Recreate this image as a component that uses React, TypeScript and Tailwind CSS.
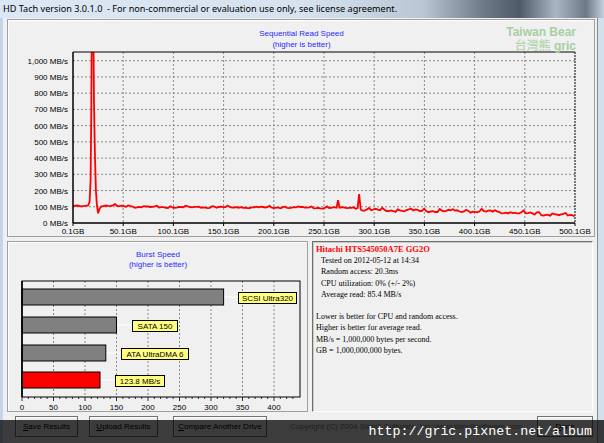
import React from 'react';

// Sequential read chart geometry (svg-local coords)
const PL = 64;
const PT = 2;
const PR = 566;
const PB = 173;
const GX = (gb: number) => PL + gb * 1.004;
const VY = (v: number) => PB - v * 0.1623;

const base = (gb: number) => {
  if (gb < 60) return 104;
  if (gb < 285) return 98 - (gb - 60) * 0.022;
  if (gb < 420) return 80 - (gb - 285) * 0.08;
  return 68 - (gb - 420) * 0.3;
};

const noise = (i: number, gb: number) => {
  const amp = gb > 290 ? 1.6 : 1;
  return amp * (Math.sin(i * 1.7) * 2.5 + Math.sin(i * 0.37) * 3 + (Math.sin(i * 5.3) > 0.85 ? 7 : 0));
};

const buildLine = () => {
  const pts: [number, number][] = [
    [0.1, 105], [4, 108], [8, 103], [12, 106], [15, 108], [16.5, 130], [17.5, 260], [18.2, 700],
    [18.6, 1100], [20.4, 1100], [20.9, 740], [21.8, 430], [22.8, 200], [23.8, 110], [25, 60],
    [26.5, 88], [28, 101], [31, 106],
  ];
  let i = 0;
  for (let gb = 33; gb <= 500; gb += 2.2) {
    i++;
    if (Math.abs(gb - 264) < 3) continue;
    if (Math.abs(gb - 285) < 3) continue;
    pts.push([gb, base(gb) + noise(i, gb)]);
  }
  pts.push([262.5, 94], [264, 141], [265.5, 95], [283.5, 92], [285, 178], [286.6, 84]);
  pts.sort((a, b) => a[0] - b[0]);
  return pts.map(([g, v]) => `${GX(g).toFixed(1)},${VY(v).toFixed(1)}`).join(' ');
};

const linePoints = buildLine();

const SeqChart = () => {
  const yVals = [0, 100, 200, 300, 400, 500, 600, 700, 800, 900, 1000];
  const xVals = [0, 1, 2, 3, 4, 5, 6, 7, 8, 9, 10];
  return (
    <svg width="586" height="186" className="block overflow-visible">
      <defs>
        <clipPath id="plotclip">
          <rect x={PL} y={PT} width={PR - PL} height={PB - PT} />
        </clipPath>
      </defs>
      {yVals.slice(1).map((v) => (
        <line key={v} x1={PL} x2={PR} y1={VY(v)} y2={VY(v)} stroke="#8a8a8a" strokeWidth="1" strokeDasharray="2 2" />
      ))}
      {xVals.slice(1, 10).map((k) => (
        <line key={k} x1={GX(k * 50)} x2={GX(k * 50)} y1={PT} y2={PB} stroke="#8a8a8a" strokeWidth="1" strokeDasharray="2 2" />
      ))}
      <polyline points={linePoints} fill="none" stroke="#ff0000" strokeWidth="1.8" clipPath="url(#plotclip)" />
      <line x1={PL} x2={PR} y1={PT} y2={PT} stroke="#000" strokeWidth="1.2" />
      <line x1={PL} x2={PR} y1={PB} y2={PB} stroke="#000" strokeWidth="1.5" />
      <line x1={PL} x2={PL} y1={PT} y2={PB} stroke="#000" strokeWidth="1.5" />
      <line x1={PR} x2={PR} y1={PT} y2={PB} stroke="#000" strokeWidth="1" strokeDasharray="2 1" />
      {xVals.map((k) => (
        <line key={k} x1={GX(k * 50)} x2={GX(k * 50)} y1={PB} y2={PB + 3} stroke="#000" strokeWidth="1" />
      ))}
      {yVals.map((v) => (
        <text key={v} x={PL - 5} y={VY(v) + 3} textAnchor="end" fontSize="8" fill="#000" fontFamily="'Liberation Sans', Arial, sans-serif">
          {v === 1000 ? '1,000' : v} MB/s
        </text>
      ))}
      {xVals.map((k) => (
        <text key={k} x={GX(k * 50)} y={184} textAnchor="middle" fontSize="8" fill="#000" fontFamily="'Liberation Sans', Arial, sans-serif">
          {k * 50}.1GB
        </text>
      ))}
    </svg>
  );
};

// Burst chart (svg-local)
const BL = 13;
const BT = 5;
const BR = 291;
const BB = 121;
const BX = (u: number) => BL + u * 0.63;

const bursts = [
  { v: 320, y: 13, fill: '#808080', label: 'SCSI Ultra320', bx: 229, bw: 58, by: 16 },
  { v: 150, y: 41, fill: '#808080', label: 'SATA 150', bx: 123, bw: 45, by: 44 },
  { v: 133, y: 69, fill: '#808080', label: 'ATA UltraDMA 6', bx: 112, bw: 67, by: 72 },
  { v: 123.8, y: 96, fill: '#ff0000', label: '123.8 MB/s', bx: 106, bw: 49, by: 99 },
];

const BurstChart = () => {
  const ticks = [50, 100, 150, 200, 250, 300, 350, 400];
  const minor = Array.from({ length: 44 }, (_, i) => i * 10);
  return (
    <svg width="297" height="140" className="block">
      {ticks.map((t) => (
        <line key={t} x1={BX(t)} x2={BX(t)} y1={BT} y2={BB} stroke="#8a8a8a" strokeWidth="1" strokeDasharray="2 2" />
      ))}
      {bursts.map((b) => (
        <g key={b.label}>
          <line x1={BX(b.v)} x2={b.bx} y1={b.y + 8} y2={b.y + 8} stroke="#ffffff" strokeWidth="1" />
          <rect x={BL} y={b.y} width={BX(b.v) - BL} height="16" fill={b.fill} stroke="#000" strokeWidth="1" />
          <rect x={b.bx + 0.5} y={b.by + 0.5} width={b.bw} height="11" fill="#ffff80" stroke="#000" strokeWidth="1" />
          <text x={b.bx + 0.5 + b.bw / 2} y={b.by + 9} textAnchor="middle" fontSize="8" fill="#000" fontFamily="'Liberation Sans', Arial, sans-serif">
            {b.label}
          </text>
        </g>
      ))}
      <rect x={BL} y={BT} width={BR - BL} height={BB - BT} fill="none" stroke="#000" strokeWidth="1" />
      <line x1={BL} x2={BL} y1={BT} y2={BB} stroke="#000" strokeWidth="1.6" />
      {minor.map((m) => (
        <line key={m} x1={BX(m)} x2={BX(m)} y1={BB} y2={BB + (m % 50 === 0 ? 4 : 2)} stroke="#000" strokeWidth="0.8" />
      ))}
      {[0, ...ticks].map((t) => (
        <text key={t} x={BX(t)} y={134} textAnchor="middle" fontSize="8" fill="#000" fontFamily="'Liberation Sans', Arial, sans-serif">
          {t}
        </text>
      ))}
    </svg>
  );
};

const Btn = ({ u, rest, w }: { u: string; rest: string; w: string }) => (
  <div className={`${w} h-[21px] flex items-center justify-center bg-[#ececec] border border-[#707070] shadow-[inset_1px_1px_0_#fff] text-[8px] text-black`}>
    <span className="underline">{u}</span>
    {rest}
  </div>
);

export default function App() {
  return (
    <div className="relative w-[604px] h-[443px] overflow-hidden bg-[#f0f0f0] font-['Liberation_Sans',Arial,sans-serif]">
      {/* title bar */}
      <div className="h-[18px] flex items-center pl-[3px] bg-[linear-gradient(90deg,#dbe7f3_0%,#d6e3ef_50%,#b9c7d5_70%,#6d7a88_80%,#4e5a67_86%,#a9b7c5_92%,#6c7886_97%,#c3d0dd_100%)]">
        <span className="font-['Noto_Sans',sans-serif] text-[9.1px] text-black whitespace-pre">
          HD Tach version 3.0.1.0  - For non-commercial or evaluation use only, see license agreement.
        </span>
      </div>

      <div className="flex h-[425px]">
        <div className="w-[3px] bg-[#c4d6e9]" />
        <div className="w-[595px] flex flex-col pl-[4px] border-r border-[#8a8a8a]">
          {/* sequential read panel */}
          <div className="relative mt-[1px] h-[218px] w-[588px] border border-[#a0a0a0] shadow-[inset_1px_1px_0_#fff] flex flex-col pl-[1px]">
            <div className="pt-[8px] text-center text-[8px] leading-[11px] text-[#2a2aff]">
              <div>Sequential Read Speed</div>
              <div>(higher is better)</div>
            </div>
            <div className="absolute right-[18px] top-[5px] text-right text-[12px] leading-[14px] text-[#a8cfa2] font-['Liberation_Sans','Noto_Sans_CJK_TC',sans-serif]">
              <div className="font-bold">Taiwan Bear</div>
              <div>
                台灣熊 <span className="font-bold">gric</span>
              </div>
            </div>
            <SeqChart />
          </div>

          <div className="mt-[4px] h-[171px] flex gap-[4px]">
            {/* burst panel */}
            <div className="w-[301px] border border-[#a0a0a0] shadow-[inset_1px_1px_0_#fff] flex flex-col pl-[1px]">
              <div className="pt-[8px] text-center text-[8px] leading-[10px] text-[#2a2aff]">
                <div>Burst Speed</div>
                <div>(higher is better)</div>
              </div>
              <div className="mt-[6px]">
                <BurstChart />
              </div>
            </div>
            {/* info panel */}
            <div className="w-[281px] border-t border-l border-[#707070] border-r border-b border-r-white border-b-white shadow-[inset_1px_1px_0_#c8c8c8] pt-[2px] pl-[3px] font-['Liberation_Serif','Times_New_Roman',serif] text-[8px] leading-[11.2px] text-black">
              <div className="font-bold text-[#ff0000] text-[8.5px]">Hitachi HTS545050A7E GG2O</div>
              <div className="pl-[5px]">Tested on 2012-05-12 at 14:34</div>
              <div className="pl-[5px]">Random access: 20.3ms</div>
              <div className="pl-[5px]">CPU utilization: 0% (+/- 2%)</div>
              <div className="pl-[5px]">Average read: 85.4 MB/s</div>
              <div className="h-[11.2px]" />
              <div>Lower is better for CPU and random access.</div>
              <div>Higher is better for average read.</div>
              <div>MB/s = 1,000,000 bytes per second.</div>
              <div>GB = 1,000,000,000 bytes.</div>
            </div>
          </div>

          {/* buttons */}
          <div className="mt-[4px] flex items-center">
            <div className="ml-[8px]">
              <Btn u="S" rest="ave Results" w="w-[63px]" />
            </div>
            <div className="ml-[11px]">
              <Btn u="U" rest="pload Results" w="w-[69px]" />
            </div>
            <div className="ml-[15px]">
              <Btn u="C" rest="ompare Another Drive" w="w-[94px]" />
            </div>
            <div className="ml-[23px] text-[8px] text-[#808080] whitespace-nowrap">
              Copyright (C) 2004 Simpli Software, Inc.  www.simplisoftware.com
            </div>
            <div className="ml-auto mr-[4px]">
              <Btn u="D" rest="one" w="w-[56px]" />
            </div>
          </div>
        </div>
        <div className="flex-1 bg-[#d3dfeb]" />
      </div>

      {/* watermark band */}
      <div className="absolute left-0 bottom-0 w-full h-[23px] bg-black/75 flex items-center justify-end pr-[12px]">
        <span className="font-['Liberation_Mono',monospace] text-[13.3px] text-white">http://gric.pixnet.net/album</span>
      </div>
    </div>
  );
}
